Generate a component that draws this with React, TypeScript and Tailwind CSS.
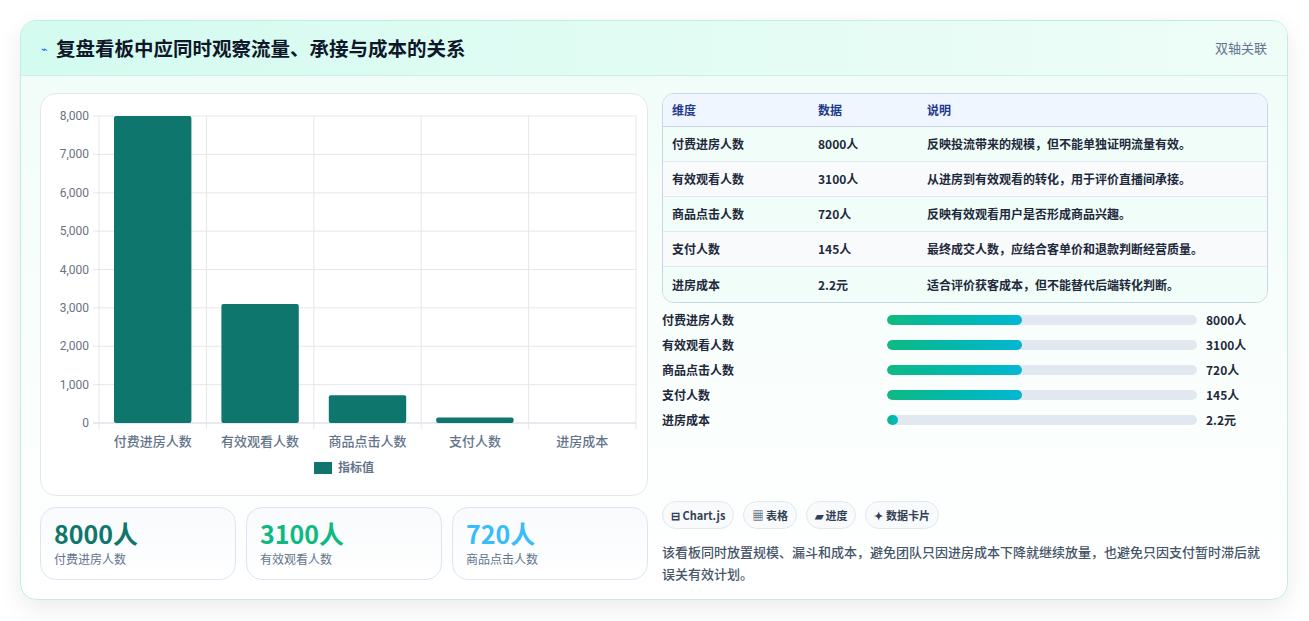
import React from "react";

const rows = [
  ["付费进房人数", "8000人", "反映投流带来的规模，但不能单独证明流量有效。"],
  ["有效观看人数", "3100人", "从进房到有效观看的转化，用于评价直播间承接。"],
  ["商品点击人数", "720人", "反映有效观看用户是否形成商品兴趣。"],
  ["支付人数", "145人", "最终成交人数，应结合客单价和退款判断经营质量。"],
  ["进房成本", "2.2元", "适合评价获客成本，但不能替代后端转化判断。"],
];
const vals = [8000, 3100, 720, 145, 2.2];
const pct = [43.5, 43.5, 43.5, 43.5, 3.5];

function Chart() {
  const L = 58, R = 595, T = 22, B = 329;
  const cw = (R - L) / 5;
  const ticks = [0, 1000, 2000, 3000, 4000, 5000, 6000, 7000, 8000];
  const y = (v: number) => B - (v / 8000) * (B - T);
  return (
    <svg width="608" height="401" className="block">
      {ticks.map((t) => (
        <g key={t}>
          <line x1={L - 6} x2={R} y1={y(t)} y2={y(t)} stroke={t === 0 ? "#cbd5e1" : "#e5e7eb"} />
          <text x={L - 10} y={y(t) + 4} textAnchor="end" fontSize="12" fill="#6b7280" fontFamily="Roboto, 'Liberation Sans', sans-serif">
            {t.toLocaleString("en-US")}
          </text>
        </g>
      ))}
      {[0, 1, 2, 3, 4, 5].map((i) => (
        <line key={i} x1={L + i * cw} x2={L + i * cw} y1={T} y2={B + 6} stroke="#e5e7eb" />
      ))}
      {vals.map((v, i) => (
        <rect key={i} x={L + i * cw + 15} width={cw - 30} y={y(v)} height={B - y(v)} rx="2" fill="#0f766e" />
      ))}
      {rows.map((r, i) => (
        <text key={i} x={L + i * cw + cw / 2} y={352} textAnchor="middle" fontSize="13" fill="#64748b" fontWeight="500" fontFamily="'Noto Sans CJK SC', sans-serif">
          {r[0]}
        </text>
      ))}
      <rect x={273} y={368} width={18} height={12} fill="#0f766e" />
      <text x={297} y={378} fontSize="12" fill="#64748b" fontWeight="bold" fontFamily="'Noto Sans CJK SC', sans-serif">指标值</text>
    </svg>
  );
}

export default function App() {
  return (
    <div className="w-[1309px] h-[621px] bg-white pt-5 px-5" style={{ fontFamily: "'Noto Sans CJK SC', 'Noto Sans', sans-serif" }}>
      <div className="w-[1268px] h-[580px] rounded-2xl border border-[#bfeee4] bg-gradient-to-b from-[#f0fdf8] to-white shadow-[0_8px_24px_rgba(0,0,0,0.08)] overflow-hidden">
        <div className="h-[55px] flex items-center justify-between px-5 bg-gradient-to-r from-[#d3fbef] to-[#effdf8] border-b border-[#ccf2e8]">
          <div className="flex items-center gap-2">
            <span className="text-[11px] text-blue-600">⌁</span>
            <span className="text-[19.5px] font-bold text-[#0f172a]">复盘看板中应同时观察流量、承接与成本的关系</span>
          </div>
          <span className="text-[13px] text-slate-500">双轴关联</span>
        </div>
        <div className="flex gap-[14px] px-[19px] pt-[17px]">
          <div className="w-[608px] flex flex-col gap-[11px]">
            <div className="h-[403px] rounded-2xl border border-[#e2e8f0] bg-white">
              <Chart />
            </div>
            <div className="grid grid-cols-3 gap-[10px]">
              {[["8000人", "text-[#0f766e]", "付费进房人数"], ["3100人", "text-[#10b981]", "有效观看人数"], ["720人", "text-[#38bdf8]", "商品点击人数"]].map(([v, c, l]) => (
                <div key={l} className="h-[73px] rounded-2xl border border-[#dbe6f3] bg-gradient-to-b from-[#f8fafc] to-white px-[13px] pt-[8px]">
                  <div className={`text-[25px] font-bold leading-[34px] ${c}`}>{v}</div>
                  <div className="text-[12px] text-slate-500">{l}</div>
                </div>
              ))}
            </div>
          </div>
          <div className="w-[607px] flex flex-col">
            <div className="rounded-xl border border-[#cbd5e1] overflow-hidden text-[12px]">
              <div className="h-[33px] flex items-center bg-[#eff6ff] border-b border-[#cbd5e1] font-bold text-[#1e3a8a]">
                <div className="w-[155px] pl-[9px]">维度</div>
                <div className="w-[109px]">数据</div>
                <div>说明</div>
              </div>
              {rows.map((r, i) => (
                <div key={i} className={`h-[35px] flex items-center font-semibold text-[#1e293b] ${i % 2 ? "bg-[#f8fafc]" : "bg-[#f0fdf8]"} ${i < 4 ? "border-b border-[#e2e8f0]" : ""}`}>
                  <div className="w-[155px] pl-[9px]">{r[0]}</div>
                  <div className="w-[109px]">{r[1]}</div>
                  <div>{r[2]}</div>
                </div>
              ))}
            </div>
            <div className="mt-[8px] flex flex-col gap-[7px]">
              {rows.map((r, i) => (
                <div key={i} className="h-[18px] flex items-center text-[12px] font-bold text-[#1e293b]">
                  <div className="w-[225px]">{r[0]}</div>
                  <div className="w-[310px] h-[10px] rounded-full bg-[#e2e8f0] overflow-hidden">
                    <div className="h-full rounded-full bg-gradient-to-r from-[#10b981] to-[#06b6d4]" style={{ width: `${pct[i]}%` }} />
                  </div>
                  <div className="ml-[9px]">{r[1]}</div>
                </div>
              ))}
            </div>
            <div className="mt-[72px] flex gap-[9px] text-[11px] font-bold text-[#334155]">
              {["⊟ Chart.js", "▦ 表格", "▰ 进度", "✦ 数据卡片"].map((t) => (
                <div key={t} className="h-[28px] px-[8px] flex items-center rounded-full border border-[#e2e8f0] bg-[#f8fafc]">{t}</div>
              ))}
            </div>
            <p className="mt-[12px] text-[13px] leading-[22px] font-medium text-[#475569]">
              该看板同时放置规模、漏斗和成本，避免团队只因进房成本下降就继续放量，也避免只因支付暂时滞后就误关有效计划。
            </p>
          </div>
        </div>
      </div>
    </div>
  );
}
